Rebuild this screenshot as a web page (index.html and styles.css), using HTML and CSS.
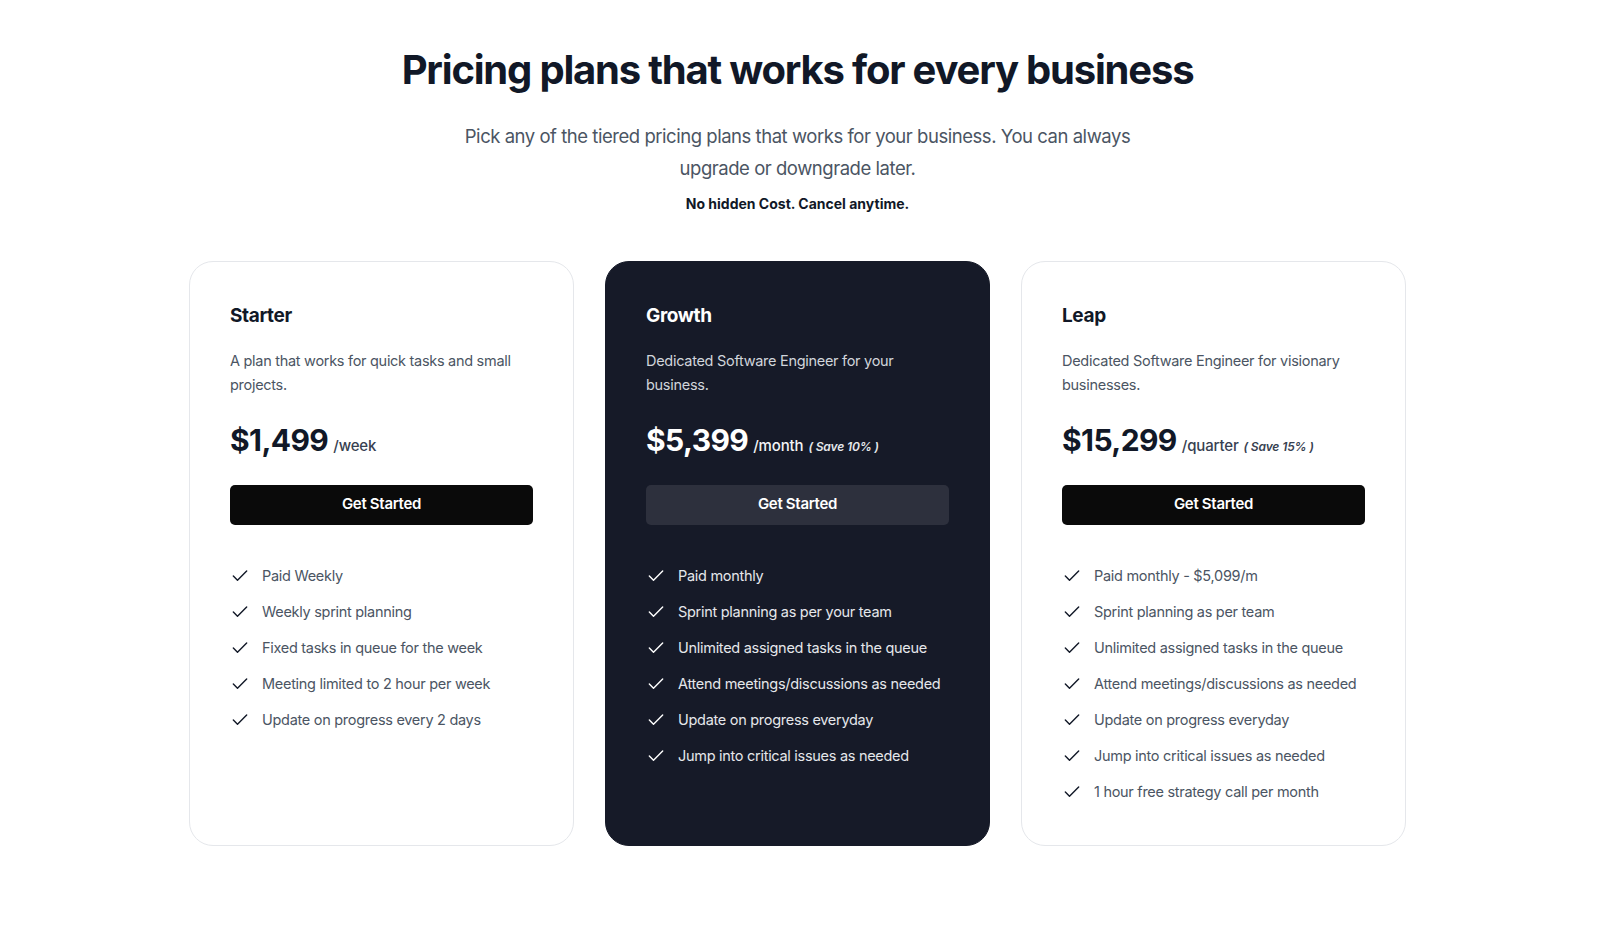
FILE: index.html
```html
<!DOCTYPE html>
<html lang="en">
<head>
<meta charset="utf-8">
<title>Pricing</title>
<link rel="stylesheet" href="styles.css">
</head>
<body>
<main class="page">
  <header class="intro">
    <h1 class="title">Pricing plans that works for every business</h1>
    <p class="subtitle">Pick any of the tiered pricing plans that works for your business. You can always upgrade or downgrade later.</p>
    <p class="note">No hidden Cost. Cancel anytime.</p>
  </header>

  <section class="plans">
    <article class="card">
      <h2 class="plan-name">Starter</h2>
      <p class="plan-desc">A plan that works for quick tasks and small projects.</p>
      <div class="price"><span class="amount">$1,499</span><span class="unit">/week</span></div>
      <button class="cta">Get Started</button>
      <ul class="features">
        <li><svg class="check" viewBox="0 0 24 24"><path d="M20 6 9 17l-5-5"/></svg><span>Paid Weekly</span></li>
        <li><svg class="check" viewBox="0 0 24 24"><path d="M20 6 9 17l-5-5"/></svg><span>Weekly sprint planning</span></li>
        <li><svg class="check" viewBox="0 0 24 24"><path d="M20 6 9 17l-5-5"/></svg><span>Fixed tasks in queue for the week</span></li>
        <li><svg class="check" viewBox="0 0 24 24"><path d="M20 6 9 17l-5-5"/></svg><span>Meeting limited to 2 hour per week</span></li>
        <li><svg class="check" viewBox="0 0 24 24"><path d="M20 6 9 17l-5-5"/></svg><span>Update on progress every 2 days</span></li>
      </ul>
    </article>

    <article class="card card-dark">
      <h2 class="plan-name">Growth</h2>
      <p class="plan-desc">Dedicated Software Engineer for your business.</p>
      <div class="price"><span class="amount">$5,399</span><span class="unit">/month</span><span class="save">( Save 10% )</span></div>
      <button class="cta">Get Started</button>
      <ul class="features">
        <li><svg class="check" viewBox="0 0 24 24"><path d="M20 6 9 17l-5-5"/></svg><span>Paid monthly</span></li>
        <li><svg class="check" viewBox="0 0 24 24"><path d="M20 6 9 17l-5-5"/></svg><span>Sprint planning as per your team</span></li>
        <li><svg class="check" viewBox="0 0 24 24"><path d="M20 6 9 17l-5-5"/></svg><span>Unlimited assigned tasks in the queue</span></li>
        <li><svg class="check" viewBox="0 0 24 24"><path d="M20 6 9 17l-5-5"/></svg><span>Attend meetings/discussions as needed</span></li>
        <li><svg class="check" viewBox="0 0 24 24"><path d="M20 6 9 17l-5-5"/></svg><span>Update on progress everyday</span></li>
        <li><svg class="check" viewBox="0 0 24 24"><path d="M20 6 9 17l-5-5"/></svg><span>Jump into critical issues as needed</span></li>
      </ul>
    </article>

    <article class="card">
      <h2 class="plan-name">Leap</h2>
      <p class="plan-desc">Dedicated Software Engineer for visionary businesses.</p>
      <div class="price"><span class="amount">$15,299</span><span class="unit">/quarter</span><span class="save">( Save 15% )</span></div>
      <button class="cta">Get Started</button>
      <ul class="features">
        <li><svg class="check" viewBox="0 0 24 24"><path d="M20 6 9 17l-5-5"/></svg><span>Paid monthly - $5,099/m</span></li>
        <li><svg class="check" viewBox="0 0 24 24"><path d="M20 6 9 17l-5-5"/></svg><span>Sprint planning as per team</span></li>
        <li><svg class="check" viewBox="0 0 24 24"><path d="M20 6 9 17l-5-5"/></svg><span>Unlimited assigned tasks in the queue</span></li>
        <li><svg class="check" viewBox="0 0 24 24"><path d="M20 6 9 17l-5-5"/></svg><span>Attend meetings/discussions as needed</span></li>
        <li><svg class="check" viewBox="0 0 24 24"><path d="M20 6 9 17l-5-5"/></svg><span>Update on progress everyday</span></li>
        <li><svg class="check" viewBox="0 0 24 24"><path d="M20 6 9 17l-5-5"/></svg><span>Jump into critical issues as needed</span></li>
        <li><svg class="check" viewBox="0 0 24 24"><path d="M20 6 9 17l-5-5"/></svg><span>1 hour free strategy call per month</span></li>
      </ul>
    </article>
  </section>
</main>
</body>
</html>
```

FILE: styles.css
```css
* { box-sizing: border-box; }

html, body {
  margin: 0;
  padding: 0;
  background: #ffffff;
}

body {
  font-family: Inter, "Noto Sans", Roboto, sans-serif;
  color: #111827;
}

.page {
  margin-right: 16px;
  padding-top: 46px;
  padding-bottom: 60px;
}

.intro {
  display: flex;
  flex-direction: column;
  align-items: center;
  text-align: center;
}

.title {
  margin: 0;
  font-size: 40px;
  line-height: 48px;
  font-weight: 700;
  letter-spacing: -0.03em;
  color: #111827;
}

.subtitle {
  margin: 26px 0 0;
  max-width: 680px;
  font-size: 18.5px;
  line-height: 32px;
  font-weight: 400;
  color: #4b5563;
  letter-spacing: -0.025em;
}

.note {
  margin: 10px 0 0;
  font-size: 14px;
  line-height: 20px;
  font-weight: 700;
  color: #111827;
}

.plans {
  margin: 47px auto 0;
  display: grid;
  grid-template-columns: repeat(3, 385px);
  column-gap: 31px;
  justify-content: center;
}

.card {
  border: 1px solid #e5e7eb;
  border-radius: 24px;
  padding: 40px 40px 41px;
  background: #ffffff;
}

.card-dark {
  background: #161a28;
  border-color: #161a28;
  color: #ffffff;
}

.plan-name {
  margin: 0;
  font-size: 19px;
  line-height: 28px;
  font-weight: 700;
  letter-spacing: -0.02em;
}

.plan-desc {
  margin: 19px 0 0;
  font-size: 14.5px;
  line-height: 24px;
  color: #4b5563;
  letter-spacing: -0.02em;
}

.card-dark .plan-desc { color: #d1d5db; }

.price {
  margin-top: 23px;
  display: flex;
  align-items: baseline;
  height: 40px;
}

.amount {
  font-size: 30px;
  line-height: 40px;
  font-weight: 700;
  letter-spacing: -0.02em;
}

.unit {
  margin-left: 5px;
  font-size: 15px;
  font-weight: 500;
  color: #374151;
  letter-spacing: -0.01em;
}

.card-dark .unit { color: #f3f4f6; }

.save {
  margin-left: 5px;
  font-size: 12px;
  font-weight: 600;
  font-style: italic;
  color: #374151;
  letter-spacing: -0.01em;
}

.card-dark .save { color: #e5e7eb; }

.cta {
  display: block;
  width: 100%;
  height: 40px;
  margin-top: 25px;
  padding: 0 0 3px;
  border: 0;
  border-radius: 5px;
  background: #0a0a0a;
  color: #ffffff;
  font-family: inherit;
  font-size: 15px;
  font-weight: 600;
  letter-spacing: -0.02em;
  cursor: pointer;
}

.card-dark .cta { background: #2d303d; }

.features {
  list-style: none;
  margin: 39px 0 0;
  padding: 0;
  display: flex;
  flex-direction: column;
  gap: 12px;
}

.features li {
  display: flex;
  align-items: center;
  gap: 12px;
  font-size: 14.5px;
  line-height: 24px;
  color: #4b5563;
  letter-spacing: -0.02em;
}

.card-dark .features li { color: #e5e7eb; }

.check {
  width: 20px;
  height: 20px;
  flex: none;
  fill: none;
  stroke: #111827;
  stroke-width: 1.7;
  stroke-linecap: round;
  stroke-linejoin: round;
}

.card-dark .check { stroke: #ffffff; }
```
